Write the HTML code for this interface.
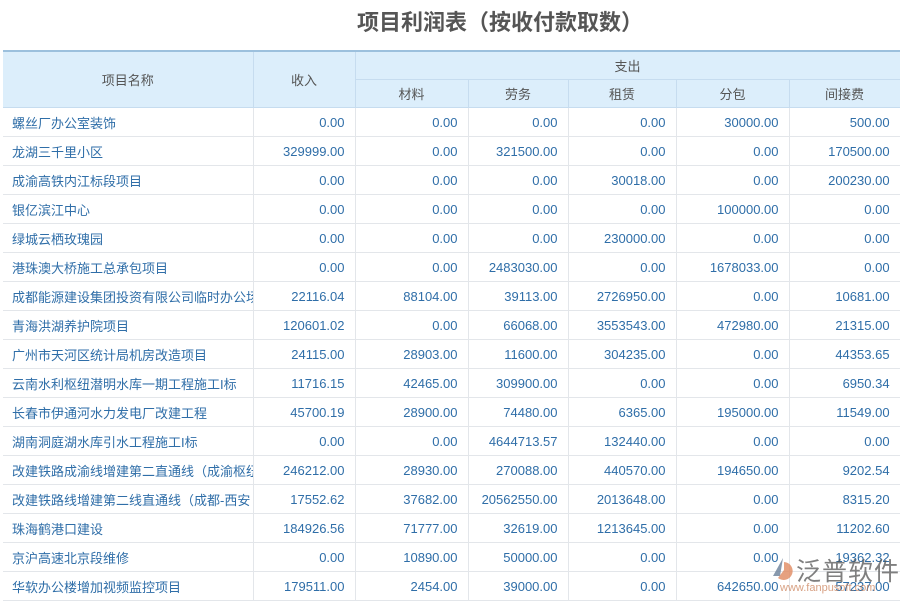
<!DOCTYPE html><html><head><meta charset="utf-8"><style>
body{margin:0;width:900px;height:600px;overflow:hidden;background:#fff;font-family:"Liberation Sans","Noto Sans CJK SC",sans-serif;position:relative}
.t{position:absolute;top:7px;left:0;width:1000px;text-align:center;font-size:22px;font-weight:bold;color:#555;line-height:32px}
table{position:absolute;top:50px;left:3px;border-collapse:collapse;table-layout:fixed;width:897px}
td,th{border:1px solid #e3e6ea;height:28px;padding:0 10px;font-size:13px;white-space:nowrap;overflow:hidden;color:#2f6ea8;font-weight:normal}
th{background:#dceefb;color:#555;border-color:#c6dcef;text-align:center;height:27px}
thead tr:first-child th{border-top:2px solid #9cc0dd}
td{text-align:right}
td:first-child{text-align:left;padding-left:9px;text-overflow:clip}
th:first-child,td:first-child{border-left:none}
.wm{position:absolute;left:796px;top:552px;font-size:25px;color:#555;opacity:.75;letter-spacing:1px;white-space:nowrap}
.wm2{position:absolute;left:780px;top:582px;font-size:11px;color:#c87a50;opacity:.7;white-space:nowrap}
</style></head><body>
<div class="t">项目利润表（按收付款取数）</div>
<table>
<colgroup><col style="width:250px"><col style="width:102px"><col style="width:113px"><col style="width:100px"><col style="width:108px"><col style="width:113px"><col style="width:111px"></colgroup>
<thead><tr><th rowspan="2">项目名称</th><th rowspan="2">收入</th><th colspan="5">支出</th></tr>
<tr><th>材料</th><th>劳务</th><th>租赁</th><th>分包</th><th>间接费</th></tr></thead>
<tbody>
<tr><td>螺丝厂办公室装饰</td><td>0.00</td><td>0.00</td><td>0.00</td><td>0.00</td><td>30000.00</td><td>500.00</td></tr>
<tr><td>龙湖三千里小区</td><td>329999.00</td><td>0.00</td><td>321500.00</td><td>0.00</td><td>0.00</td><td>170500.00</td></tr>
<tr><td>成渝高铁内江标段项目</td><td>0.00</td><td>0.00</td><td>0.00</td><td>30018.00</td><td>0.00</td><td>200230.00</td></tr>
<tr><td>银亿滨江中心</td><td>0.00</td><td>0.00</td><td>0.00</td><td>0.00</td><td>100000.00</td><td>0.00</td></tr>
<tr><td>绿城云栖玫瑰园</td><td>0.00</td><td>0.00</td><td>0.00</td><td>230000.00</td><td>0.00</td><td>0.00</td></tr>
<tr><td>港珠澳大桥施工总承包项目</td><td>0.00</td><td>0.00</td><td>2483030.00</td><td>0.00</td><td>1678033.00</td><td>0.00</td></tr>
<tr><td>成都能源建设集团投资有限公司临时办公场</td><td>22116.04</td><td>88104.00</td><td>39113.00</td><td>2726950.00</td><td>0.00</td><td>10681.00</td></tr>
<tr><td>青海洪湖养护院项目</td><td>120601.02</td><td>0.00</td><td>66068.00</td><td>3553543.00</td><td>472980.00</td><td>21315.00</td></tr>
<tr><td>广州市天河区统计局机房改造项目</td><td>24115.00</td><td>28903.00</td><td>11600.00</td><td>304235.00</td><td>0.00</td><td>44353.65</td></tr>
<tr><td>云南水利枢纽潜明水库一期工程施工I标</td><td>11716.15</td><td>42465.00</td><td>309900.00</td><td>0.00</td><td>0.00</td><td>6950.34</td></tr>
<tr><td>长春市伊通河水力发电厂改建工程</td><td>45700.19</td><td>28900.00</td><td>74480.00</td><td>6365.00</td><td>195000.00</td><td>11549.00</td></tr>
<tr><td>湖南洞庭湖水库引水工程施工I标</td><td>0.00</td><td>0.00</td><td>4644713.57</td><td>132440.00</td><td>0.00</td><td>0.00</td></tr>
<tr><td>改建铁路成渝线增建第二直通线（成渝枢纽</td><td>246212.00</td><td>28930.00</td><td>270088.00</td><td>440570.00</td><td>194650.00</td><td>9202.54</td></tr>
<tr><td>改建铁路线增建第二线直通线（成都-西安</td><td>17552.62</td><td>37682.00</td><td>20562550.00</td><td>2013648.00</td><td>0.00</td><td>8315.20</td></tr>
<tr><td>珠海鹤港口建设</td><td>184926.56</td><td>71777.00</td><td>32619.00</td><td>1213645.00</td><td>0.00</td><td>11202.60</td></tr>
<tr><td>京沪高速北京段维修</td><td>0.00</td><td>10890.00</td><td>50000.00</td><td>0.00</td><td>0.00</td><td>19362.32</td></tr>
<tr><td>华软办公楼增加视频监控项目</td><td>179511.00</td><td>2454.00</td><td>39000.00</td><td>0.00</td><td>642650.00</td><td>57237.00</td></tr>
</tbody></table>
<svg style="position:absolute;left:770px;top:556px" width="26" height="26" viewBox="0 0 26 26"><path d="M13 2 L3 20 L10 20 Z" fill="#6a7f99" opacity=".8"/><path d="M14 6 A9 9 0 1 1 8 22 L14 14 Z" fill="#e08a60" opacity=".8"/></svg>
<div class="wm">泛普软件</div>
<div class="wm2">www.fanpusoft.com</div>
</body></html>
